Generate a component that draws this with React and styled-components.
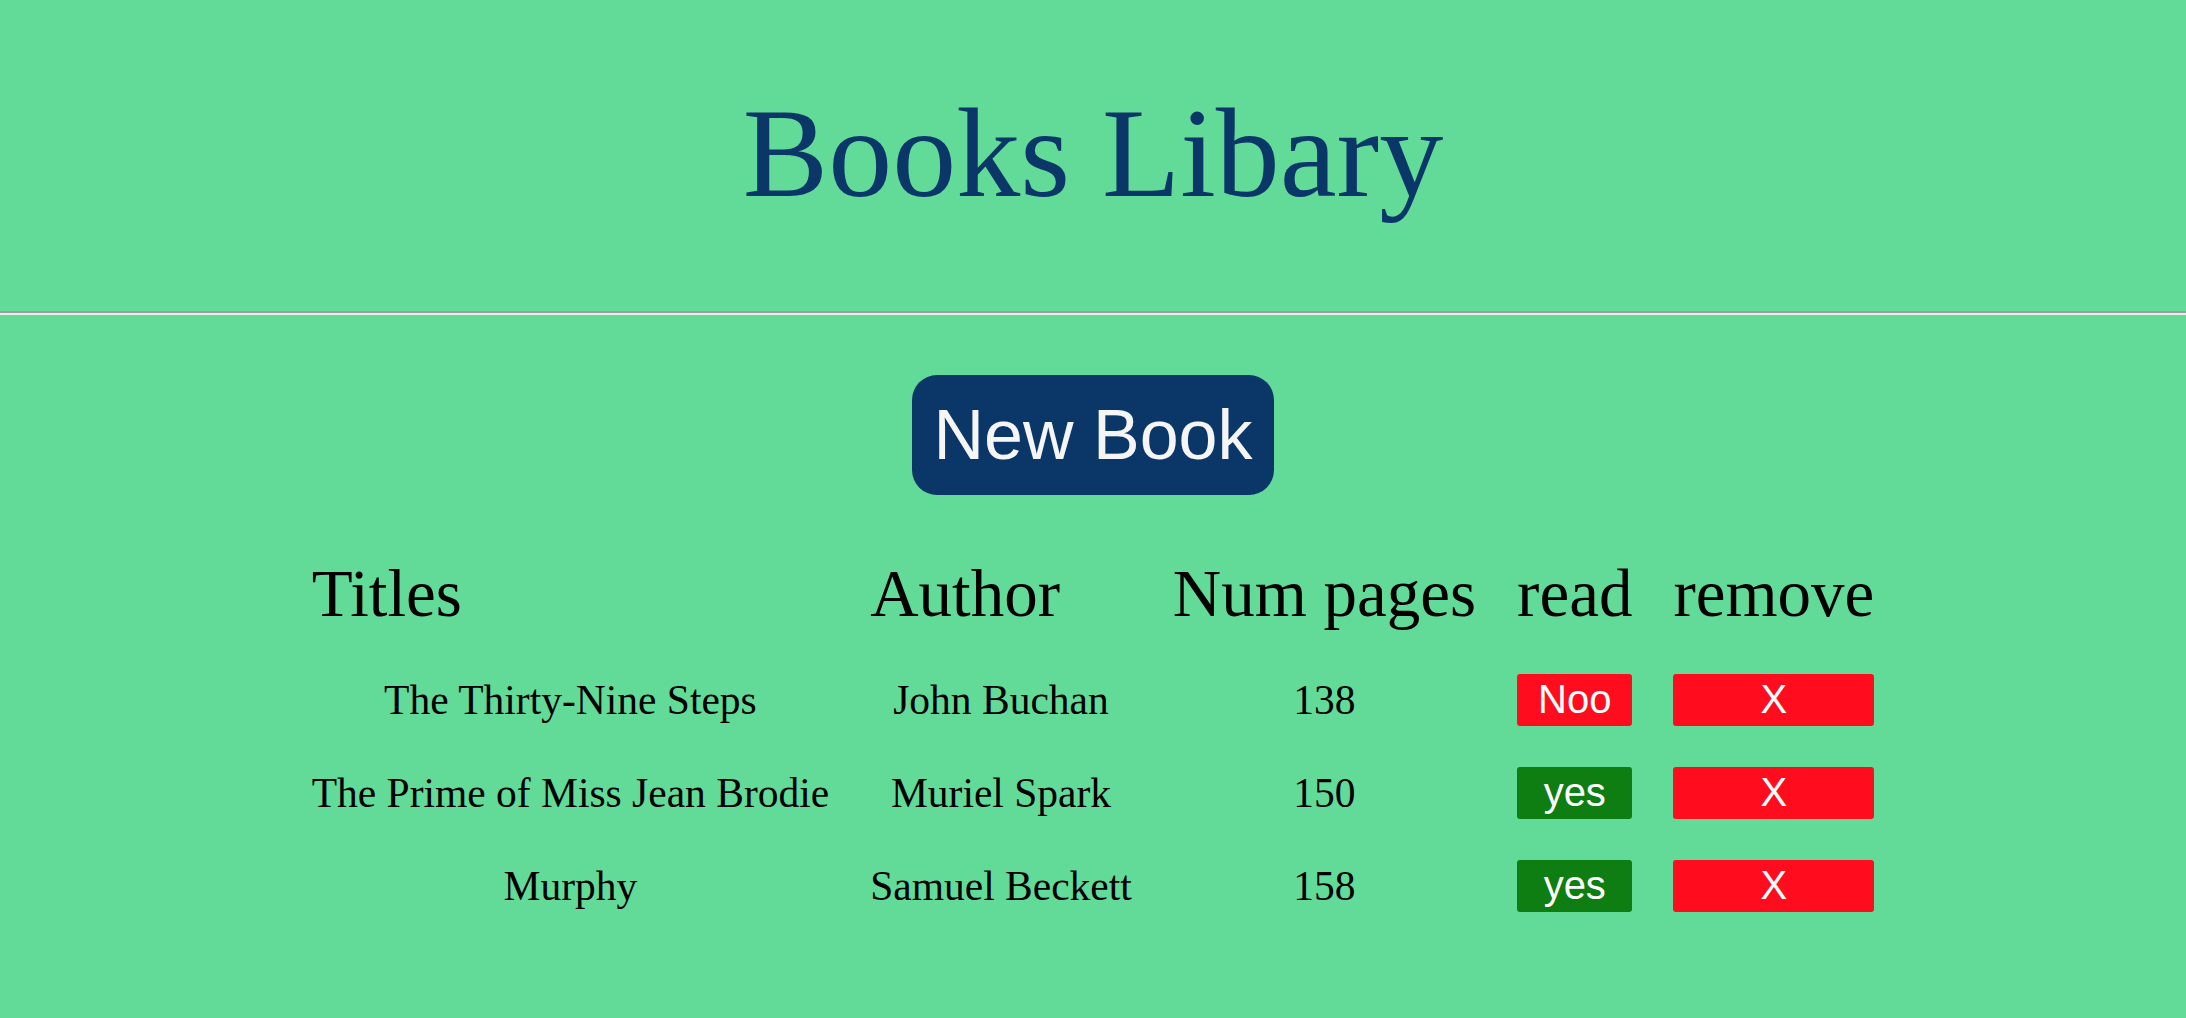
import React from 'react';
import styled, { createGlobalStyle } from 'styled-components';

const GlobalStyle = createGlobalStyle`
  html, body {
    margin: 0;
    background: #62db99;
  }
  body {
    font-family: "Liberation Serif", "Times New Roman", serif;
    color: #000;
  }
`;

const Header = styled.header`
  padding: 80px 0 84px;
`;

const Title = styled.h1`
  margin: 0;
  text-align: center;
  font-size: 128px;
  font-weight: normal;
  line-height: normal;
  color: #0a3768;
`;

const Divider = styled.hr`
  margin: 0;
  height: 0;
  border: none;
  border-top: 2px solid #9d9d9d;
  border-bottom: 2px solid #ececec;
`;

const Main = styled.main`
  padding-top: 60px;
`;

const NewBookButton = styled.button`
  display: block;
  margin: 0 auto;
  padding: 20px 21px;
  font-family: "Liberation Sans", Arial, sans-serif;
  font-size: 70px;
  line-height: normal;
  color: #f5f5f5;
  background: #0a3768;
  border: none;
  border-radius: 25px;
  cursor: pointer;
`;

const BooksTable = styled.table`
  margin: 38px auto 0;
  border-spacing: 1px;
`;

const HeadCell = styled.th`
  padding: 21px 20px;
  text-align: left;
  font-size: 67px;
  font-weight: normal;
  line-height: normal;
`;

const Cell = styled.td`
  padding: 20px 20px;
  text-align: center;
  vertical-align: middle;
  font-size: 41.5px;
  line-height: normal;
`;

const CellButton = styled.button`
  display: block;
  width: 100%;
  padding: 3px 0 4px;
  font-family: "Liberation Sans", Arial, sans-serif;
  font-size: 40px;
  line-height: normal;
  color: #fff;
  background: ${(p) => p.$bg};
  border: none;
  border-radius: 3px;
  cursor: pointer;
`;

const books = [
  { title: 'The Thirty-Nine Steps', author: 'John Buchan', pages: 138, read: false },
  { title: 'The Prime of Miss Jean Brodie', author: 'Muriel Spark', pages: 150, read: true },
  { title: 'Murphy', author: 'Samuel Beckett', pages: 158, read: true },
];

const App = () => (
  <>
    <GlobalStyle />
    <Header>
      <Title>Books Libary</Title>
    </Header>
    <Divider />
    <Main>
      <NewBookButton>New Book</NewBookButton>
      <BooksTable>
        <thead>
          <tr>
            <HeadCell>Titles</HeadCell>
            <HeadCell>Author</HeadCell>
            <HeadCell>Num pages</HeadCell>
            <HeadCell>read</HeadCell>
            <HeadCell>remove</HeadCell>
          </tr>
        </thead>
        <tbody>
          {books.map((book) => (
            <tr key={book.title}>
              <Cell>{book.title}</Cell>
              <Cell>{book.author}</Cell>
              <Cell>{book.pages}</Cell>
              <Cell>
                <CellButton $bg={book.read ? '#0e7d12' : '#ff0c1e'}>
                  {book.read ? 'yes' : 'Noo'}
                </CellButton>
              </Cell>
              <Cell>
                <CellButton $bg="#ff0c1e">X</CellButton>
              </Cell>
            </tr>
          ))}
        </tbody>
      </BooksTable>
    </Main>
  </>
);

export default App;
